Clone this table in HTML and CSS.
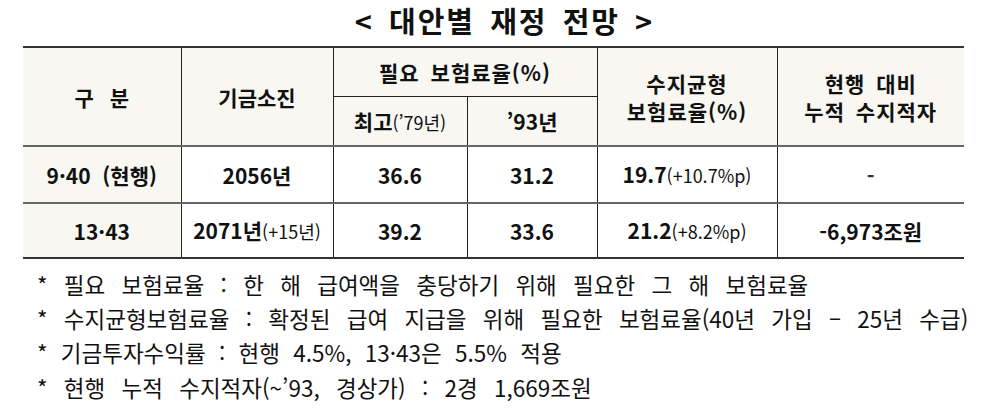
FILE: index.html
```html
<!DOCTYPE html>
<html lang="ko">
<head>
<meta charset="utf-8">
<link rel="stylesheet" href="styles.css">
</head>
<body>
<div class="page">
  <h1 class="title">&lt; 대안별 재정 전망 &gt;</h1>
  <table class="fin">
    <colgroup>
      <col class="c1"><col class="c2"><col class="c3"><col class="c4"><col class="c5"><col class="c6">
    </colgroup>
    <thead>
      <tr class="h1">
        <th rowspan="2" class="shade gubun">구&nbsp;&nbsp;분</th>
        <th rowspan="2" class="shade">기금소진</th>
        <th colspan="2" class="shade wide">필요 보험료율(%)</th>
        <th rowspan="2" class="shade wide">수지균형<br>보험료율(%)</th>
        <th rowspan="2" class="shade wide">현행 대비<br>누적 수지적자</th>
      </tr>
      <tr class="h2">
        <th class="shade">최고<span class="sub">(’79년)</span></th>
        <th class="shade">’93년</th>
      </tr>
    </thead>
    <tbody>
      <tr class="r1">
        <td class="shade">9·40&nbsp;&nbsp;(현행)</td>
        <td>2056년</td>
        <td>36.6</td>
        <td>31.2</td>
        <td>19.7<span class="sub">(+10.7%p)</span></td>
        <td class="dash">-</td>
      </tr>
      <tr class="r2">
        <td class="shade">13·43</td>
        <td>2071년<span class="sub">(+15년)</span></td>
        <td>39.2</td>
        <td>33.6</td>
        <td>21.2<span class="sub">(+8.2%p)</span></td>
        <td>-6,973조원</td>
      </tr>
    </tbody>
  </table>
  <ul class="notes">
    <li>* 필요 보험료율 : 한 해 급여액을 충당하기 위해 필요한 그 해 보험료율</li>
    <li>* 수지균형보험료율 : 확정된 급여 지급을 위해 필요한 보험료율(40년 가입 – 25년 수급)</li>
    <li class="tight">* 기금투자수익률 : 현행 4.5%, 13·43은 5.5% 적용</li>
    <li>* 현행 누적 수지적자(~’93, 경상가) : 2경 1,669조원</li>
  </ul>
</div>
</body>
</html>
```

FILE: styles.css
```css
html, body {
  margin: 0;
  padding: 0;
  background: #ffffff;
}
body {
  font-family: "Noto Sans CJK KR", "Noto Sans", sans-serif;
  color: #111111;
}
.page {
  width: 991px;
  height: 413px;
  overflow: hidden;
  display: flex;
  flex-direction: column;
}
.title {
  margin: 0;
  height: 46px;
  line-height: 40px;
  font-size: 29px;
  font-weight: 700;
  text-align: center;
  padding-left: 18px;
  word-spacing: 5px;
  letter-spacing: 2px;
}
.fin {
  margin-left: 23px;
  width: 941px;
  border-collapse: collapse;
  table-layout: fixed;
  border-top: 2px solid #333333;
  border-bottom: 2px solid #333333;
}
.c1 { width: 158px; }
.c2 { width: 152px; }
.c3 { width: 134px; }
.c4 { width: 130px; }
.c5 { width: 180px; }
.c6 { width: 187px; }
.fin th, .fin td {
  padding: 0;
  text-align: center;
  vertical-align: middle;
  border-left: 1px solid #222222;
  font-weight: 700;
  font-size: 21px;
  line-height: 28px;
}
.fin th:first-child, .fin td:first-child { border-left: none; }
.fin .h2 th:first-child { border-left: 1px solid #222222; }
.fin .h1 th { height: 48px; }
.fin .h2 th { height: 48px; border-top: 1px solid #222222; }
.fin thead { border-bottom: 2px solid #666666; }
.fin .r1 td { height: 55px; border-bottom: 2px solid #666666; }
.fin .r2 td { height: 53px; }
.wide { font-weight: 600; letter-spacing: 1px; word-spacing: 4px; }
.gubun { word-spacing: 2px; }
.shade { background: #f8f7f2; }
.sub {
  font-weight: 400;
  font-size: 18px;
}
.dash { font-weight: 300; color: #333333; }
.notes {
  list-style: none;
  margin: 0;
  padding: 8px 0 0 37px;
  font-size: 22.5px;
  line-height: 34.2px;
  word-spacing: 10px;
}
.notes li { white-space: nowrap; }
.notes .tight { word-spacing: 7px; }
```
